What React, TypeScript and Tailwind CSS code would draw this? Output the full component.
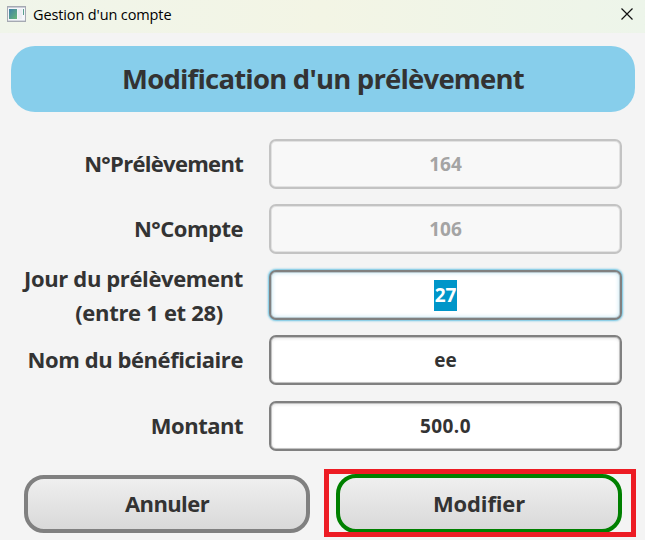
import React from "react";

type FieldProps = {
  label: React.ReactNode;
  value: React.ReactNode;
  disabled?: boolean;
  focused?: boolean;
  className?: string;
};

function Field({ label, value, disabled, focused, className = "" }: FieldProps) {
  const tone = disabled
    ? "border-[#c3c3c3] bg-[#f8f8f8] text-[#a4a4a4] shadow-[inset_0_0_0_1px_#e2e2e2]"
    : focused
      ? "border-[#808080] bg-white text-white shadow-[0_0_2px_1px_#6cc3e2,inset_0_0_0_1px_#b9c8ce,inset_0_0_4px_1px_#c5e6f2]"
      : "border-[#808080] bg-white text-[#333] shadow-[inset_0_0_0_1px_#c2c2c2,inset_0_1px_3px_1px_#e9e9e9]";
  return (
    <div className={`flex h-[50px] items-center ${className}`}>
      <div className="mr-[26px] flex w-[243px] shrink-0 flex-col items-end text-[22px] leading-[34px] whitespace-nowrap">
        {label}
      </div>
      <div className={`flex h-[50px] w-[353px] items-center justify-center rounded-[7px] border-2 text-[19px] leading-[31px] ${tone}`}>
        {value}
      </div>
    </div>
  );
}

export default function App() {
  return (
    <div className="relative h-[540px] w-[645px] overflow-hidden bg-[#f4f4f4] font-['Open_Sans','Noto_Sans',sans-serif] font-bold text-[#333]">
      <header className="flex h-[33px] items-center bg-linear-to-r from-[#f0f5ea] via-[#f3f5e5] to-[#edf5ea] pr-[12px] pb-[4px] pl-[7px] font-normal text-black">
        <svg className="-mt-px" width="19" height="16" viewBox="0 0 19 16">
          <rect x="0.5" y="0.5" width="18" height="15" fill="#f5f6fa" stroke="#a5a9b2" />
          <path d="M1 1.5H18" stroke="#c8ccd6" />
          <rect x="2" y="3" width="8" height="10" fill="url(#pane)" />
          <rect x="11" y="3" width="4" height="10" fill="#eceef4" />
          <path d="M16.5 3V9" stroke="#58a090" />
          <path d="M1 14.5H18" stroke="#d5d8e0" />
          <defs>
            <linearGradient id="pane" x1="0" y1="0" x2="1" y2="1">
              <stop stopColor="#3f80a8" />
              <stop offset="1" stopColor="#69b878" />
            </linearGradient>
          </defs>
        </svg>
        <span className="ml-[7px] text-[14.5px] leading-5 tracking-[-0.12px]">Gestion d'un compte</span>
        <svg className="-mt-px ml-auto" width="12" height="12" viewBox="0 0 12 12">
          <path d="M0.5 0.5L11.5 11.5M11.5 0.5L0.5 11.5" stroke="#111" strokeWidth="1.2" />
        </svg>
      </header>

      <h1 className="mt-[13px] mr-[10px] ml-[11px] flex h-[66px] items-center justify-center rounded-[24px] bg-[#87ceeb] text-[27.5px] tracking-[-0.8px]">
        <span>Modification d'un prélèvement</span>
      </h1>

      <main className="mt-[27px]">
        <Field label={<span className="-mt-px pb-px tracking-[-0.7px]">N°Prélèvement</span>} value="164" disabled />
        <Field className="mt-[15px]" label={<span className="-mt-px pb-px tracking-[-0.5px]">N°Compte</span>} value="106" disabled />
        <Field
          className="mt-[16px]"
          label={
            <>
              <span className="tracking-[-0.37px]">Jour du prélèvement</span>
              <span className="mr-[20px] tracking-[-0.3px]">(entre 1 et 28)</span>
            </>
          }
          value={<span className="h-[31px] bg-[#0096c9] px-px">27</span>}
          focused
        />
        <Field className="mt-[15px]" label={<span className="-mt-px pb-px tracking-[-0.43px]">Nom du bénéficiaire</span>} value="ee" />
        <Field className="mt-[16px]" label={<span className="-mt-px pb-px tracking-[-0.5px]">Montant</span>} value={<span className="tracking-[0.4px]">500.0</span>} />
      </main>

      <div className="mt-[24px] ml-[24px] flex gap-[26px] text-[22px]">
        <button className="flex h-[58px] w-[286px] items-center justify-center rounded-[20px] border-4 border-[#808080] bg-linear-to-b from-[#efefef] to-[#d9d9d9] pb-[2px]">
          <span className="tracking-[-0.6px]">Annuler</span>
        </button>
        <button className="-mt-px flex h-[59px] w-[286px] items-center justify-center rounded-[20px] border-4 border-[#008000] bg-linear-to-b from-[#efefef] to-[#d9d9d9]">
          <span className="tracking-[-0.15px]">Modifier</span>
        </button>
      </div>

      <div className="absolute top-[469px] left-[324px] h-[68px] w-[312px] border-5 border-[#ed1c24]" />
    </div>
  );
}
